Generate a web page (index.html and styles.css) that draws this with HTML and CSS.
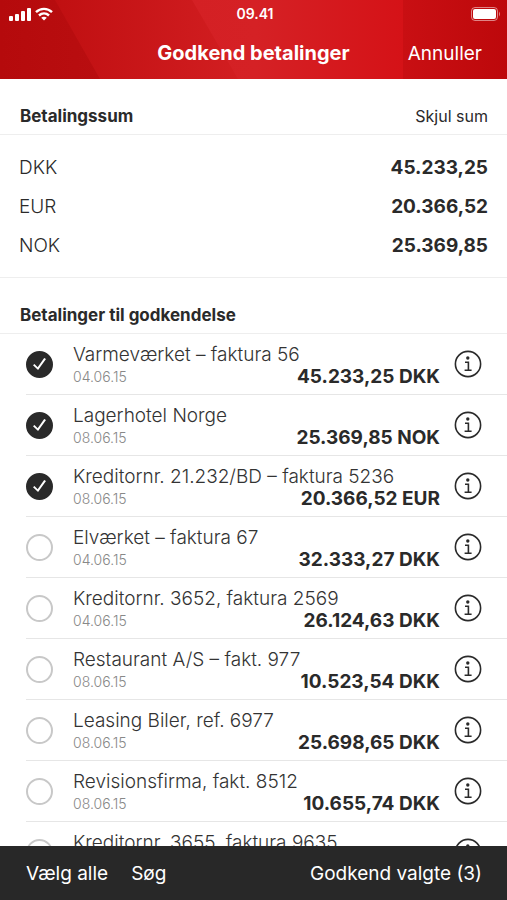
FILE: index.html
```html
<!DOCTYPE html>
<html lang="da">
<head>
<meta charset="utf-8">
<meta name="viewport" content="width=device-width, initial-scale=1">
<title>Godkend betalinger</title>
<link rel="stylesheet" href="styles.css">
</head>
<body>
<svg class="defs" aria-hidden="true">
  <symbol id="info" viewBox="0 0 28 28">
    <circle cx="14" cy="14" r="12.6" fill="none" stroke="currentColor" stroke-width="1.6"/>
    <circle cx="13.8" cy="8" r="1.7" fill="currentColor"/>
    <path d="M11 12.3h3.4v8M10.6 20.3h7" fill="none" stroke="currentColor" stroke-width="1.6"/>
  </symbol>
</svg>
<header class="header">
  <svg class="header-art" viewBox="0 0 507 79" preserveAspectRatio="none" aria-hidden="true">
    <defs>
      <linearGradient id="left"><stop offset="0" stop-color="#b50a0c"/><stop offset="1" stop-color="#b90e10"/></linearGradient>
      <linearGradient id="mid"><stop offset=".1" stop-color="#c00f11"/><stop offset=".5" stop-color="#d31f22"/></linearGradient>
      <linearGradient id="bright"><stop offset="0" stop-color="#d42024"/><stop offset=".3" stop-color="#d52125"/><stop offset="1" stop-color="#d51217"/></linearGradient>
      <linearGradient id="right"><stop offset="0" stop-color="#c90f13"/><stop offset="1" stop-color="#bd080b"/></linearGradient>
    </defs>
    <rect width="507" height="79" fill="url(#mid)"/>
    <path d="M0 0H55L100 79H0Z" fill="url(#left)"/>
    <path d="M192 0H404V79H238Z" fill="url(#bright)"/>
    <path d="M403 0H507V79H403Z" fill="url(#right)"/>
  </svg>
  <div class="status">
    <div class="signals">
      <svg width="22" height="14" viewBox="0 0 22 14" fill="#fff" aria-hidden="true"><rect x="0" y="9" width="4" height="5" rx="1"/><rect x="6" y="7" width="4" height="7" rx="1"/><rect x="12" y="4" width="4" height="10" rx="1"/><rect x="18" y="1" width="4" height="13" rx="1"/></svg>
      <svg width="18" height="14" viewBox="0 0 18 14" fill="none" stroke="#fff" stroke-width="2.4" aria-hidden="true"><path d="M1 5.2C5.500 .8 12.500 .8 17 5.200M4 8.500C6.900 5.800 11.100 5.800 14 8.500"/><path d="M9 13.500L6.200 10.700C7.800 9.300 10.200 9.300 11.800 10.700Z" fill="#fff" stroke="none"/></svg>
    </div>
    <time class="clock">09.41</time>
    <svg class="battery" width="30" height="14" viewBox="0 0 30 14" aria-hidden="true"><rect x=".5" y=".5" width="26" height="13" rx="3.500" fill="none" stroke="#fff" stroke-opacity=".5"/><rect x="2" y="2" width="23" height="10" rx="2" fill="#fff"/><path d="M28 4.500Q30 7 28 9.500Z" fill="#fff" fill-opacity=".5"/></svg>
  </div>
  <div class="nav">
    <h1>Godkend betalinger</h1>
    <button type="button" class="text-button">Annuller</button>
  </div>
</header>
<main class="content">
  <section>
    <div class="section-head">
      <h2>Betalingssum</h2>
      <button type="button" class="text-button small">Skjul sum</button>
    </div>
    <dl class="sums">
      <div><dt>DKK</dt><dd>45.233,25</dd></div>
      <div><dt>EUR</dt><dd>20.366,52</dd></div>
      <div><dt>NOK</dt><dd>25.369,85</dd></div>
    </dl>
  </section>
  <section>
    <div class="section-head">
      <h2>Betalinger til godkendelse</h2>
    </div>
    <ul class="payments">
      <li><input type="checkbox" id="p1" checked><label for="p1"><span class="payee">Varmeværket – faktura 56</span><span class="date">04.06.15</span><strong>45.233,25 DKK</strong></label><button type="button" class="info" aria-label="Info"><svg><use href="#info"/></svg></button></li>
      <li><input type="checkbox" id="p2" checked><label for="p2"><span class="payee">Lagerhotel Norge</span><span class="date">08.06.15</span><strong>25.369,85 NOK</strong></label><button type="button" class="info" aria-label="Info"><svg><use href="#info"/></svg></button></li>
      <li><input type="checkbox" id="p3" checked><label for="p3"><span class="payee">Kreditornr. 21.232/BD – faktura 5236</span><span class="date">08.06.15</span><strong>20.366,52 EUR</strong></label><button type="button" class="info" aria-label="Info"><svg><use href="#info"/></svg></button></li>
      <li><input type="checkbox" id="p4"><label for="p4"><span class="payee">Elværket – faktura 67</span><span class="date">04.06.15</span><strong>32.333,27 DKK</strong></label><button type="button" class="info" aria-label="Info"><svg><use href="#info"/></svg></button></li>
      <li><input type="checkbox" id="p5"><label for="p5"><span class="payee">Kreditornr. 3652, faktura 2569</span><span class="date">04.06.15</span><strong>26.124,63 DKK</strong></label><button type="button" class="info" aria-label="Info"><svg><use href="#info"/></svg></button></li>
      <li><input type="checkbox" id="p6"><label for="p6"><span class="payee">Restaurant A/S – fakt. 977</span><span class="date">08.06.15</span><strong>10.523,54 DKK</strong></label><button type="button" class="info" aria-label="Info"><svg><use href="#info"/></svg></button></li>
      <li><input type="checkbox" id="p7"><label for="p7"><span class="payee">Leasing Biler, ref. 6977</span><span class="date">08.06.15</span><strong>25.698,65 DKK</strong></label><button type="button" class="info" aria-label="Info"><svg><use href="#info"/></svg></button></li>
      <li><input type="checkbox" id="p8"><label for="p8"><span class="payee">Revisionsfirma, fakt. 8512</span><span class="date">08.06.15</span><strong>10.655,74 DKK</strong></label><button type="button" class="info" aria-label="Info"><svg><use href="#info"/></svg></button></li>
      <li><input type="checkbox" id="p9"><label for="p9"><span class="payee">Kreditornr. 3655, faktura 9635</span></label><button type="button" class="info" aria-label="Info"><svg><use href="#info"/></svg></button></li>
    </ul>
  </section>
</main>
<footer class="toolbar">
  <button type="button" class="text-button">Vælg alle</button>
  <button type="button" class="text-button">Søg</button>
  <button type="button" class="text-button approve">Godkend valgte (3)</button>
</footer>
</body>
</html>
```
FILE: styles.css
```css
* {
  box-sizing: border-box;
}

body {
  margin: 0;
  height: 100vh;
  display: flex;
  flex-direction: column;
  background: #fff;
  color: #2a2a2a;
  font-family: Inter, "Liberation Sans", sans-serif;
  font-size: 19px;
  line-height: 22px;
}

h1, h2, dl, dd, ul {
  margin: 0;
  padding: 0;
}

button {
  border: 0;
  padding: 0;
  background: none;
  color: inherit;
  font: inherit;
  cursor: pointer;
}

.defs {
  position: absolute;
  width: 0;
  height: 0;
}

.header {
  position: relative;
  flex: none;
  color: #fff;
}

.header-art {
  position: absolute;
  inset: 0;
  z-index: -1;
  width: 100%;
  height: 100%;
}

.status {
  display: grid;
  grid-template-columns: 1fr auto 1fr;
  align-items: center;
  height: 27px;
  padding: 0 6px 0 9px;
}

.signals {
  display: flex;
  gap: 4px;
}

.clock {
  font-size: 14px;
  font-weight: 600;
}

.battery {
  justify-self: end;
}

.nav {
  display: grid;
  grid-template-columns: 1fr auto 1fr;
  align-items: baseline;
  height: 52px;
  padding: 15px 25px 0;
}

h1 {
  grid-column: 2;
  font-size: 20px;
  font-weight: 700;
}

.nav .text-button {
  justify-self: end;
}

.content {
  flex: 1;
  min-height: 0;
  overflow: hidden;
}

.section-head {
  display: flex;
  align-items: center;
  justify-content: space-between;
  height: 56px;
  padding: 18px 19px 0 20px;
  border-bottom: 1px solid #eee;
}

h2 {
  font-size: 17px;
  font-weight: 700;
}

.text-button.small {
  font-size: 16px;
}

.sums {
  padding: 13px 19px 12px;
  border-bottom: 1px solid #eee;
}

.sums div {
  display: flex;
  align-items: center;
  justify-content: space-between;
  height: 39px;
}

.sums dt {
  font-weight: 300;
}

.sums dd,
.payments strong {
  font-weight: 700;
}

.payments {
  list-style: none;
}

.payments li {
  display: flex;
  align-items: center;
  height: 61px;
  margin-left: 26px;
  padding-right: 25px;
  border-bottom: 1px solid #e6e6e6;
}

.payments input {
  appearance: none;
  flex: none;
  width: 27px;
  height: 27px;
  margin: 0 20px 0 0;
  border: 2px solid #c8c8c8;
  border-radius: 50%;
}

.payments input:checked {
  display: grid;
  place-items: center;
  border-color: #2a2a2a;
  background: #2a2a2a;
}

.payments input:checked::before {
  content: "";
  width: 13px;
  height: 12px;
  background: #fff;
  clip-path: polygon(0 60%, 11% 49%, 36% 77%, 86% 0, 100% 8%, 39% 100%);
}

.payments label {
  flex: 1;
  display: grid;
  grid-template-columns: auto 1fr;
  grid-template-rows: 22px 22px;
  align-items: center;
  padding-top: 4px;
}

.payee {
  grid-column: 1 / -1;
  color: #333;
  font-weight: 300;
}

.date {
  color: #888;
  font-size: 14px;
  font-weight: 300;
}

.payments strong {
  text-align: right;
}

.info {
  flex: none;
  width: 28px;
  height: 28px;
  margin-left: 14px;
}

.info svg {
  display: block;
  width: 28px;
  height: 28px;
}

.toolbar {
  flex: none;
  display: flex;
  align-items: center;
  gap: 23px;
  height: 54px;
  padding: 2px 25px 0 26px;
  background: #282828;
  color: #fff;
}

.approve {
  margin-left: auto;
}
```
